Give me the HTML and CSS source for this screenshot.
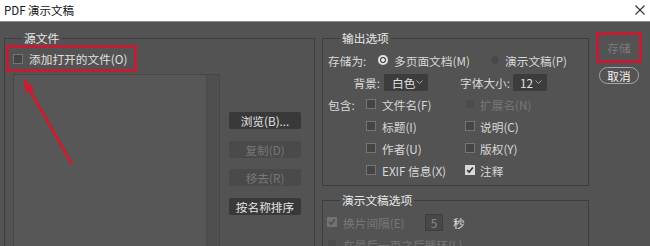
FILE: index.html
```html
<!DOCTYPE html>
<html lang="zh-CN">
<head>
<meta charset="utf-8">
<title>PDF 演示文稿</title>
<link rel="stylesheet" href="styles.css">
</head>
<body>
<header class="titlebar">
  <span class="title">PDF 演示文稿</span>
  <svg class="close" width="10" height="10" viewBox="0 0 10 10"><path d="M0.5 0.5L9.5 9.5M9.5 0.5L0.5 9.5" stroke="#333" stroke-width="1.1" fill="none"/></svg>
</header>
<main class="content">
  <fieldset class="group group-src">
    <legend>源文件</legend>
    <div class="add-open">
      <span class="cb"></span><span class="lbl">添加打开的文件(O)</span>
    </div>
    <div class="src-row">
      <div class="list"><div class="list-scroll"></div></div>
      <div class="src-buttons">
        <button class="btn">浏览(B)...</button>
        <button class="btn disabled">复制(D)</button>
        <button class="btn disabled">移去(R)</button>
        <button class="btn">按名称排序</button>
      </div>
    </div>
  </fieldset>

  <div class="right">
    <fieldset class="group group-out">
      <legend>输出选项</legend>
      <div class="rows rows-out">
        <div class="row">
          <span class="lab w50">存储为:</span>
          <span class="opt w112"><span class="radio on"></span><span class="t6">多页面文档(M)</span></span>
          <span class="opt"><span class="radio"></span><span class="t5">演示文稿(P)</span></span>
        </div>
        <div class="row">
          <span class="lab w52 ra">背景:</span>
          <span class="select sel-bg"><span>白色</span><svg width="7" height="4" viewBox="0 0 7 4"><path d="M0.5 0.5L3.5 3.5L6.5 0.5" stroke="#a8a8a8" fill="none"/></svg></span>
          <span class="lab w53 ml32">字体大小:</span>
          <span class="select sel-size"><span>12</span><svg width="7" height="4" viewBox="0 0 7 4"><path d="M0.5 0.5L3.5 3.5L6.5 0.5" stroke="#a8a8a8" fill="none"/></svg></span>
        </div>
        <div class="row">
          <span class="lab w38">包含:</span>
          <span class="opt w99"><span class="cb"></span><span class="t6">文件名(F)</span></span>
          <span class="opt"><span class="cb off"></span><span class="t5 dim">扩展名(N)</span></span>
        </div>
        <div class="row">
          <span class="lab w38"></span>
          <span class="opt w99"><span class="cb"></span><span class="t6">标题(I)</span></span>
          <span class="opt"><span class="cb"></span><span class="t5">说明(C)</span></span>
        </div>
        <div class="row">
          <span class="lab w38"></span>
          <span class="opt w99"><span class="cb"></span><span class="t6">作者(U)</span></span>
          <span class="opt"><span class="cb"></span><span class="t5">版权(Y)</span></span>
        </div>
        <div class="row">
          <span class="lab w38"></span>
          <span class="opt w99"><span class="cb"></span><span class="t6">EXIF 信息(X)</span></span>
          <span class="opt"><span class="cb checked"><svg width="8" height="8" viewBox="0 0 8 8"><path d="M1.2 4.2L3.2 6.1L6.9 1.6" stroke="#333" stroke-width="1.6" fill="none"/></svg></span><span class="t5">注释</span></span>
        </div>
      </div>
    </fieldset>

    <fieldset class="group group-pres">
      <legend>演示文稿选项</legend>
      <div class="rows rows-pres">
        <div class="row">
          <span class="cb dis-checked"><svg width="8" height="8" viewBox="0 0 8 8"><path d="M1.2 4.2L3.2 6.1L6.9 1.6" stroke="#4e4e4e" stroke-width="1.6" fill="none"/></svg></span>
          <span class="t6 dim w82">换片间隔(E)</span>
          <span class="num">5</span>
          <span class="sec">秒</span>
        </div>
        <div class="row">
          <span class="cb off"></span>
          <span class="t6 dim">在最后一页之后循环(L)</span>
        </div>
      </div>
    </fieldset>
  </div>

  <div class="actions">
    <div class="save">存储</div>
    <div class="cancel">取消</div>
  </div>
</main>
<svg class="arrow" width="650" height="246" viewBox="0 0 650 246">
  <line x1="72" y1="164" x2="30.4" y2="91" stroke="#c81f30" stroke-width="3"/>
  <polygon points="23,78 34.9,88.3 25.9,93.6" fill="#c81f30"/>
</svg>
</body>
</html>
```

FILE: styles.css
```css
* { box-sizing: border-box; }
html, body { margin: 0; padding: 0; }
body {
  width: 650px;
  height: 246px;
  overflow: hidden;
  position: relative;
  background: #535353;
  font-family: "Noto Sans CJK SC", "Noto Sans", sans-serif;
  font-size: 11.7px;
  color: #d8d8d8;
}
.titlebar {
  height: 22px;
  background: #fff;
  border-bottom: 1px solid #8c8c8c;
  display: flex;
  align-items: center;
  justify-content: space-between;
  padding: 0 5px 2px 4px;
  color: #111;
  font-size: 11.5px;
}
.content {
  display: flex;
  align-items: flex-start;
  gap: 7px;
  padding: 9px 0 0 4px;
}
.group {
  margin: 0;
  padding: 0;
  min-width: 0;
  border: 1px solid #3e3e3e;
}
.group legend {
  padding: 0 2px;
  margin-left: 17px;
  line-height: 14px;
  color: #e8e8e8;
}
.group-src { width: 311px; height: 260px; }
.add-open {
  margin-left: 1px;
  width: 131px;
  height: 27px;
  border: 3px solid #c11e35;
  display: flex;
  align-items: center;
  padding-left: 4px;
}
.add-open .lbl { margin-left: 6px; color: #e0e0e0; }
.cb {
  flex: none;
  width: 10px;
  height: 10px;
  border: 1px solid #747474;
  background: #454545;
  display: flex;
  align-items: center;
  justify-content: center;
}
.cb.off { border-color: #555; background: #4c4c4c; }
.cb.checked { border-color: #d8d8d8; background: #d8d8d8; }
.cb.dis-checked { border-color: #727272; background: #727272; }
.src-row {
  display: flex;
  margin: 2px 0 0 8px;
}
.list {
  width: 207px;
  height: 200px;
  border: 1px solid #474747;
  background: #575757;
  display: flex;
  justify-content: flex-end;
}
.list-scroll {
  width: 13px;
  background: #4f4f4f;
  border-left: 1px solid #4a4a4a;
}
.src-buttons {
  margin: 38px 0 0 9px;
  width: 72px;
  display: flex;
  flex-direction: column;
  gap: 11.5px;
}
.btn {
  height: 17px;
  border: 0;
  border-radius: 2px;
  padding: 0;
  background: #393939;
  color: #e4e4e4;
  font: inherit;
  line-height: 17px;
}
.btn.disabled { background: #4a4a4a; color: #767676; }
.right {
  width: 267px;
  display: flex;
  flex-direction: column;
  gap: 7px;
}
.rows-out { padding: 4px 0 4px 5px; }
.rows-pres { padding: 4px 0 0 4px; }
.group-pres { height: 80px; }
.row {
  display: flex;
  align-items: center;
  height: 22px;
  white-space: nowrap;
}
.lab { flex: none; color: #d8d8d8; }
.w50 { width: 50px; }
.w52 { width: 52px; }
.w53 { width: 53px; }
.w38 { width: 38px; }
.w82 { width: 82px; }
.ra { text-align: right; }
.ml32 { margin-left: 32px; }
.opt { display: flex; align-items: center; flex: none; }
.w112 { width: 112px; }
.w99 { width: 99px; }
.t6 { margin-left: 6px; }
.t5 { margin-left: 5px; }
.dim { color: #777; }
.radio {
  flex: none;
  width: 10px;
  height: 10px;
  border-radius: 50%;
  background: #484848;
  border: 1px solid #5a5a5a;
}
.radio.on {
  background: #e2e2e2;
  border: 0;
  box-shadow: inset 0 0 0 2px #e2e2e2, inset 0 0 0 3px #3a3a3a;
  background: radial-gradient(circle, #e8e8e8 0 2px, #333 2.5px 3.2px, #dcdcdc 3.7px);
}
.select {
  height: 17px;
  background: #3c3c3c;
  border-radius: 2px;
  display: flex;
  align-items: center;
  justify-content: space-between;
  color: #e0e0e0;
}
.sel-bg { margin-left: 4px; width: 44px; padding: 0 5px 0 8px; }
.sel-size { width: 34px; padding: 0 5px 0 7px; }
.num {
  width: 18px;
  height: 17px;
  background: #484848;
  border: 1px solid #3e3e3e;
  color: #8a8a8a;
  text-align: center;
  line-height: 15px;
}
.sec { margin-left: 10px; color: #e0e0e0; }
.actions {
  width: 46px;
  margin-top: 1px;
  display: flex;
  flex-direction: column;
  align-items: center;
}
.save {
  width: 46px;
  height: 31px;
  border: 3px solid #c11e35;
  display: flex;
  align-items: center;
  justify-content: center;
  color: #7a7a7a;
}
.cancel {
  margin-top: 4px;
  width: 40px;
  height: 17px;
  border: 1px solid #a6a6a6;
  border-radius: 9px;
  color: #f2f2f2;
  text-align: center;
  line-height: 15px;
}
.arrow {
  position: absolute;
  left: 0;
  top: 0;
  pointer-events: none;
}
```
